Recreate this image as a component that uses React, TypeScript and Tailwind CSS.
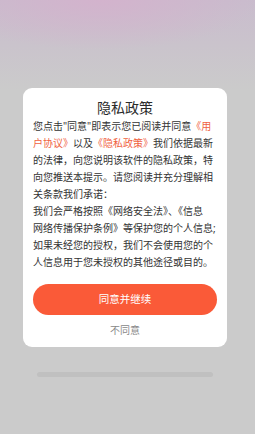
import React from "react";

const R = "text-[#f0623f]";

export default function App() {
  const font = { fontFamily: '"Noto Sans", "Noto Sans CJK SC", sans-serif' };
  const lines: React.ReactNode[] = [
    <>您点击"同意"即表示您已阅读并同意<span className={R}>《用</span></>,
    <><span className={R}>户协议》</span>以及<span className={R}>《隐私政策》</span>我们依据最新</>,
    <>的法律，向您说明该软件的隐私政策，特</>,
    <>向您推送本提示。请您阅读并充分理解相</>,
    <>关条款我们承诺：</>,
    <>我们会严格按照《网络安全法》、《信息</>,
    <>网络传播保护条例》等保护您的个人信息;</>,
    <>如果未经您的授权，我们不会使用您的个</>,
    <>人信息用于您未授权的其他途径或目的。</>,
  ];
  return (
    <div className="relative w-[255px] h-[434px] overflow-hidden bg-[#cbcbcb]" style={font}>
      <div className="absolute inset-x-0 top-0 h-[90px] bg-[radial-gradient(ellipse_160px_50px_at_100px_0px,#d3b3cd,transparent),linear-gradient(to_bottom,#c9bccd,#cbcbcb)]" />
      <div className="relative flex flex-col pt-[88px]">
        <div className="ml-[23px] w-[204px] rounded-[9px] bg-white px-[10px] pt-[11px] pb-[10px] flex flex-col">
          <div className="text-center text-[14px] leading-[18px] h-[18px] text-[#2a2a2a]">隐私政策</div>
          <div className="mt-[0.5px] text-[10px] text-[#333]">
            {lines.map((l, i) => (
              <div key={i} className="h-[17px] leading-[17px] whitespace-nowrap overflow-visible">
                {l}
              </div>
            ))}
          </div>
          <button className="mt-[13.5px] h-[31px] w-full rounded-full bg-[#fa5a38] text-white text-[10.5px] leading-[31px]">
            同意并继续
          </button>
          <div className="mt-[8px] text-center text-[10px] leading-[14px] h-[14px] text-[#888]">不同意</div>
        </div>
        <div className="ml-[37px] mt-[25px] w-[176px] h-[5px] rounded-full bg-[#c0c0c0]" />
      </div>
    </div>
  );
}
